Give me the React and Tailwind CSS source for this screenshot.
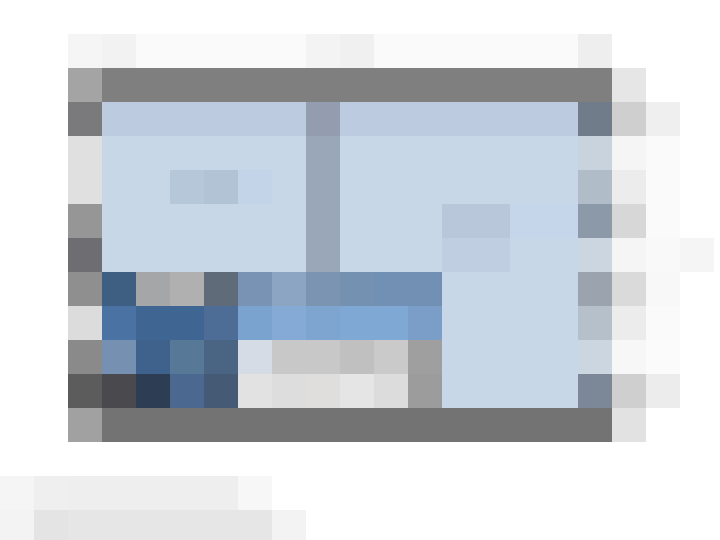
import React from "react";

// pixel size of one block in the picture
const CELL = 34;
const W = "#ffffff";
const L = "#c8d7e8";

const rep = (c, n) => Array(n).fill(c);
const pad = (row) => [...row, ...rep(W, 22 - row.length)];

const rows = [
  rep(W, 22),
  pad([W, W, "#f5f5f5", "#f2f2f2", ...rep("#fafafa", 5), "#f3f3f3", "#f0f0f0", ...rep("#fafafa", 6), "#eeeeee"]),
  pad([W, W, "#a4a4a4", ...rep("#7f7f7f", 15), "#e6e6e6"]),
  pad([W, W, "#7a7a7c", ...rep("#bccbdf", 6), "#939daf", ...rep("#bccbdf", 7), "#717c8b", "#cfcfcf", "#efefef"]),
  pad([W, W, "#e0e0e0", ...rep(L, 6), "#9aa7b8", ...rep(L, 7), "#c8d3de", "#f5f5f5", "#fafafa"]),
  pad([W, W, "#e0e0e0", L, L, "#b7c7da", "#b3c3d6", "#c4d4e8", L, "#9aa7b8", ...rep(L, 7), "#b0bcc8", "#ececec", "#fafafa"]),
  pad([W, W, "#969696", ...rep(L, 6), "#9aa7b8", L, L, L, "#b8c8da", "#b8c8da", "#c5d5ea", "#c5d5ea", "#8c99a8", "#d7d7d7", "#fafafa"]),
  pad([W, W, "#6e6e72", ...rep(L, 6), "#9aa7b8", L, L, L, "#bfcee0", "#bfcee0", L, L, "#cbd6e1", "#f5f5f5", "#f9f9f9", "#f5f5f5"]),
  pad([W, W, "#8f8f8f", "#3f5f82", "#a4a6a8", "#b0b0b0", "#5f6b78", "#7893b3", "#8ca5c2", "#7a94b2", "#7591b2", "#7190b4", "#7190b4", ...rep(L, 4), "#9ba4ae", "#dadada", "#f8f8f8"]),
  pad([W, W, "#dcdcdc", "#4a73a3", "#3f6592", "#3f6592", "#4d6d96", "#7aa3d0", "#86aad6", "#7ea5cf", "#80a8d5", "#80a8d5", "#7a9ec8", ...rep(L, 4), "#b5c0cb", "#ececec", "#fafafa"]),
  pad([W, W, "#8a8a8a", "#7590b0", "#3f628c", "#587898", "#4a6484", "#d5dce5", "#c8c8c8", "#c8c8c8", "#c0c0c0", "#cacaca", "#9f9f9f", ...rep(L, 4), "#cbd6e1", "#f7f7f7", "#fbfbfb"]),
  pad([W, W, "#5c5c5c", "#4a4a4e", "#2d3e54", "#4a6890", "#455a75", "#e2e2e2", "#dddddd", "#e0dddd", "#e5e5e5", "#dcdcdc", "#9c9c9c", ...rep(L, 4), "#7c8898", "#cfcfcf", "#ececec"]),
  pad([W, W, "#a1a1a1", ...rep("#737373", 15), "#e2e2e2"]),
  rep(W, 22),
  pad(["#f5f5f5", "#efefef", ...rep("#eeeeee", 5), "#f7f7f7"]),
  pad(["#f3f3f3", "#e4e4e4", ...rep("#e6e6e6", 6), "#f3f3f3"]),
];

function PixelIcon() {
  return (
    <svg width="720" height="540" viewBox="0 0 720 540" shapeRendering="crispEdges" className="block">
      {rows.map((row, r) =>
        row.map((c, i) =>
          c === W ? null : (
            <rect key={`${r}-${i}`} x={i * CELL} y={r * CELL} width={CELL} height={CELL} fill={c} />
          )
        )
      )}
    </svg>
  );
}

export default function App() {
  return (
    <div className="w-[720px] h-[540px] bg-white overflow-hidden">
      <PixelIcon />
    </div>
  );
}
